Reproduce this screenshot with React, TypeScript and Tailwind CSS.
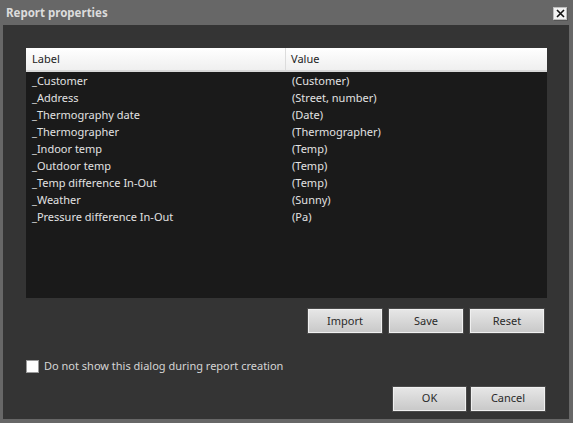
const rows: [string, string][] = [
  ['_Customer', '(Customer)'],
  ['_Address', '(Street, number)'],
  ['_Thermography date', '(Date)'],
  ['_Thermographer', '(Thermographer)'],
  ['_Indoor temp', '(Temp)'],
  ['_Outdoor temp', '(Temp)'],
  ['_Temp difference In-Out', '(Temp)'],
  ['_Weather', '(Sunny)'],
  ['_Pressure difference In-Out', '(Pa)'],
];

function Btn({ label, w }: { label: string; w: string }) {
  return (
    <button
      className={`${w} h-[24px] border border-[#f0f0f0] bg-gradient-to-b from-[#e6e6e6] to-[#c9c9c9] text-[11px] text-[#2a2a2a] shadow-[0_0_0_1px_#4a4a4a]`}
    >
      {label}
    </button>
  );
}

export default function App() {
  return (
    <div
      className="flex h-[423px] w-[573px] flex-col bg-[#676767]"
      style={{ fontFamily: '"Noto Sans", "Open Sans", sans-serif' }}
    >
      {/* title bar */}
      <div className="relative flex h-[25px] items-center pl-[6px]">
        <span className="text-[11.5px] font-bold text-[#dcdcdc]">Report properties</span>
        <div className="absolute left-[553px] top-[7px] flex h-[13px] w-[14px] items-center justify-center border border-[#bdbdbd] bg-[#f2f2f2] shadow-[1px_1px_0_#555]">
          <svg width="9" height="9" viewBox="0 0 9 9">
            <path d="M1 1 L8 8 M8 1 L1 8" stroke="#111" strokeWidth="1.6" />
          </svg>
        </div>
      </div>

      {/* content */}
      <div className="mb-[4px] ml-[3px] mr-[4px] flex flex-1 flex-col bg-[#343434] pl-[23px] pr-[22px] pt-[23px]">
        <div className="h-[250px] bg-[#1a1a1a]">
          <div className="flex h-[24px] border-b-2 border-[#d8d8d8] bg-gradient-to-b from-white to-[#efefef] text-[11px] text-[#222]">
            <div className="flex w-[260px] items-center border-r border-[#dcdcdc] pl-[6px]">Label</div>
            <div className="flex items-center pl-[5px]">Value</div>
          </div>
          <div className="pt-[1px]">
            {rows.map(([l, v]) => (
              <div key={l} className="flex h-[17px] items-center text-[11px] text-[#e2e2e2]">
                <div className="w-[260px] pl-[6px]">{l}</div>
                <div className="pl-[6px]">{v}</div>
              </div>
            ))}
          </div>
        </div>

        <div className="mr-[3px] mt-[11px] flex justify-end gap-[7px]">
          <Btn label="Import" w="w-[74px]" />
          <Btn label="Save" w="w-[74px]" />
          <Btn label="Reset" w="w-[74px]" />
        </div>

        <div className="mt-[25px] flex items-center gap-[5px]">
          <div className="h-[13px] w-[13px] border border-[#9a9a9a] bg-white" />
          <span className="text-[11px] text-[#d4d4d4]">Do not show this dialog during report creation</span>
        </div>

        <div className="mr-[2px] mt-[12px] flex justify-end gap-[5px]">
          <Btn label="OK" w="w-[73px]" />
          <Btn label="Cancel" w="w-[74px]" />
        </div>
      </div>
    </div>
  );
}
